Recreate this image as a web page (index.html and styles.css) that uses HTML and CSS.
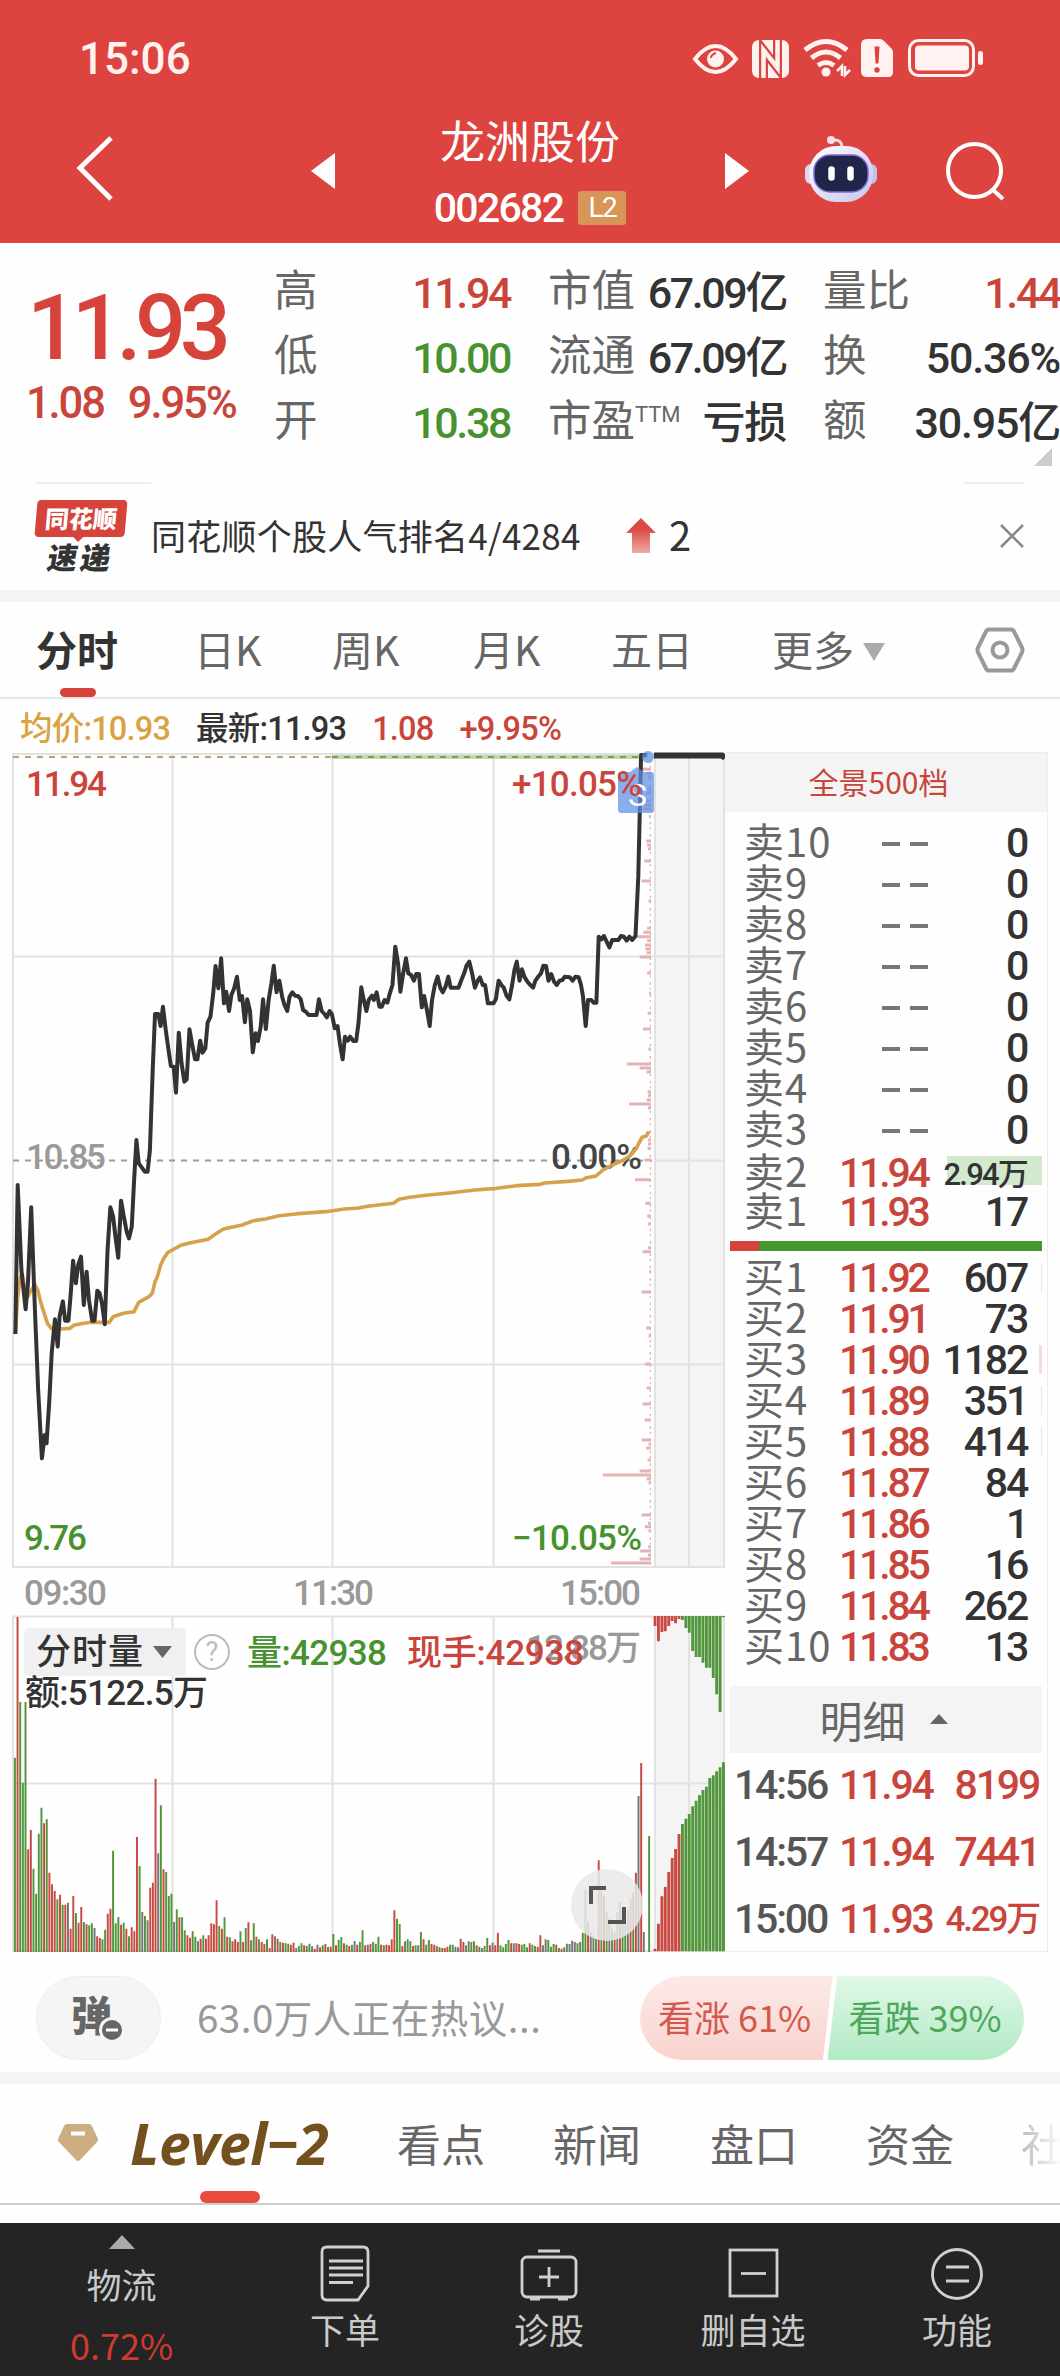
FILE: index.html
```html
<!DOCTYPE html>
<html lang="zh-CN">
<head>
  <meta charset="UTF-8">
  <meta name="viewport" content="width=device-width, initial-scale=1.0">
  <title>龙洲股份 002682</title>
  <link rel="stylesheet" href="styles.css">
</head>
<body>
  <header class="header">
    <div class="status-bar">
      <span class="clock">15:06</span>
      <svg class="status-icons" width="294" height="44" viewBox="0 0 294 44" fill="none" stroke="#fff2f0" stroke-width="4">
        <path d="M4 22Q14 9 24.500 9T45 22Q35 35 24.500 35T4 22Z"/>
        <circle cx="24.500" cy="22" r="8.500" fill="#fff2f0" stroke="none"/>
        <path d="M20 21c0-3 2-4 5-5" stroke="#dd4440" stroke-width="2"/>
        <rect x="61" y="3" width="37" height="38" rx="7" fill="#fff2f0" stroke="none"/>
        <path d="M72.500 42V13L86.500 31V2" stroke="#dd4440" stroke-width="9"/>
        <path d="M72.500 41V13L86.500 31V3" stroke-width="4.500"/>
        <path d="M114 13q21-17 42 0M120.500 21q14.500-12 29 0M127 28.500q8-6 16 0" stroke-width="5"/>
        <circle cx="135" cy="35" r="4.500" fill="#fff2f0" stroke="none"/>
        <path d="M151 39V29l-5 5M154 29v9l5-5" stroke-width="2.500"/>
        <path d="M176 2h13q2 0 4 2l7 7q2 2 2 4v20q0 5-5 5h-21q-6 0-6-6V8q0-6 6-6z" fill="#fff2f0" stroke="none"/>
        <path d="M183.500 9.500h5l-1 17h-3z" fill="#dd4440" stroke="none"/>
        <circle cx="186" cy="33" r="2.700" fill="#dd4440" stroke="none"/>
        <rect x="218.500" y="3.500" width="64" height="35" rx="9" stroke-width="3"/>
        <rect x="224" y="8.500" width="54" height="25" rx="4" fill="#fff2f0" stroke="none"/>
        <rect x="287" y="14" width="5" height="14" rx="2.500" fill="#fff2f0" stroke="none"/>
      </svg>
    </div>
    <div class="title-bar">
      <svg class="back" width="40" height="66" viewBox="0 0 40 66" fill="none" stroke="#fff" stroke-width="5"><path d="M36 3L5 33l31 31"/></svg>
      <svg class="prev" width="24" height="36" viewBox="0 0 24 36"><path d="M24 0v36L0 18z" fill="#fff"/></svg>
      <div class="stock">
        <div class="stock-name">龙洲股份</div>
        <div class="stock-code">002682<span class="level">L2</span></div>
      </div>
      <svg class="next" width="24" height="36" viewBox="0 0 24 36"><path d="M0 0v36l24-18z" fill="#fff"/></svg>
      <svg class="robot" width="72" height="68" viewBox="0 0 72 68">
        <defs>
          <linearGradient id="helmet" x2="1" y2="1"><stop offset="0" stop-color="#fff"/><stop offset="1" stop-color="#c6c4f0"/></linearGradient>
        </defs>
        <path d="M37 13Q37 4 28 5" fill="none" stroke="#f6dfe8" stroke-width="3"/>
        <circle cx="26" cy="5" r="4" fill="#f6dfe8"/>
        <rect x="0" y="29" width="12" height="20" rx="6" fill="#dcd9f5"/>
        <rect x="60" y="29" width="12" height="20" rx="6" fill="#c3c0ee"/>
        <rect x="4" y="11" width="64" height="56" rx="27" fill="url(#helmet)"/>
        <rect x="9" y="20" width="54" height="37" rx="16" fill="#20264a" stroke="#7d6bd8" stroke-width="1.500"/>
        <path d="M26.500 34.500v8M45.500 34.500v8" stroke="#fff" stroke-width="6.500" stroke-linecap="round"/>
      </svg>
      <svg class="search" width="62" height="60" viewBox="0 0 62 60" fill="none" stroke="#fff" stroke-width="4"><circle cx="29.500" cy="29.500" r="26.500"/><path d="M47 48l11 10"/></svg>
    </div>
  </header>

  <section class="quote">
    <div class="price">
      <div class="price-now">11.93</div>
      <div class="price-change"><span>1.08</span><span>9.95%</span></div>
    </div>
    <div class="stats">
      <span class="label">高</span><span class="value up">11.94</span>
      <span class="label">市值</span><span class="value">67.09亿</span>
      <span class="label">量比</span><span class="value up">1.44</span>
      <span class="label">低</span><span class="value down">10.00</span>
      <span class="label">流通</span><span class="value">67.09亿</span>
      <span class="label">换</span><span class="value wide">50.36%</span>
      <span class="label">开</span><span class="value down">10.38</span>
      <span class="label">市盈<sup>TTM</sup></span><span class="value wide">亏损</span>
      <span class="label">额</span><span class="value wide">30.95亿</span>
    </div>
    <div class="quote-corner"></div>
  </section>

  <section class="notice">
    <div class="notice-logo">
      <div class="logo-top">同花顺</div>
      <div class="logo-bottom">速递</div>
    </div>
    <span class="notice-text">同花顺个股人气排名4/4284</span>
    <svg class="rank-up" width="30" height="36" viewBox="0 0 30 36">
      <defs><linearGradient id="rank" x2="0" y2="1"><stop offset=".3" stop-color="#dc4842"/><stop offset="1" stop-color="#efaca8"/></linearGradient></defs>
      <path d="M15 0l15 15h-6v20H6V15H0z" fill="url(#rank)"/>
    </svg>
    <span class="rank">2</span>
    <svg class="close" width="24" height="24" viewBox="0 0 24 24" stroke="#888" stroke-width="2.500"><path d="M1 1l22 22M23 1L1 23"/></svg>
  </section>

  <nav class="period-tabs">
    <span class="period active">分时</span>
    <span class="period">日K</span>
    <span class="period">周K</span>
    <span class="period">月K</span>
    <span class="period">五日</span>
    <span class="period">更多<i class="caret"></i></span>
    <svg class="settings" width="50" height="46" viewBox="0 0 50 46" fill="none" stroke="#999" stroke-width="4"><path d="M14 2.500h22q2 0 3 2l8 16q1 2.500 0 5l-8 16q-1 2-3 2H14q-2 0-3-2l-8-16q-1-2.500 0-5l8-16q1-2 3-2z"/><circle cx="25" cy="23" r="7.500"/></svg>
  </nav>

  <div class="chart-info">
    <span class="avg">均价:10.93</span>
    <span>最新:11.93</span>
    <span class="up">1.08</span>
    <span class="up">+9.95%</span>
  </div>

  <main class="market">
    <div class="charts">
      <svg class="price-chart" width="725" height="860" viewBox="0 0 725 860">
        <rect x="654" y="3" width="71" height="814" fill="#f4f4f4"/>
        <path class="grid" d="M13 4H724V817H13ZM172.500 4V817M332.500 4V817M493.500 4V817M655 4V817M689 4V817M13 206.500H724M13 614.500H724M654 410.500H724"/>
        <path d="M13 7H332" stroke="#bfa071" stroke-width="2" stroke-dasharray="6 6"/>
        <path d="M332 7H645" stroke="#b9dcb0" stroke-width="4"/>
        <path d="M332 7H645" stroke="#879a58" stroke-width="2" stroke-dasharray="6 6"/>
        <path d="M13 410.500H652" stroke="#999" stroke-width="2" stroke-dasharray="6 6"/>
        <g class="chart-text">
          <text x="26" y="419" textLength="80" fill="#999">10.85</text>
          <text x="551" y="419" textLength="91" fill="#444">0.00%</text>
        </g>
        <svg width="730" height="860" viewBox="0 60 1568 2580" preserveAspectRatio="none">
          <path id="profile" class="profile"/>
          <path class="profile-edge" d="M1397 90V2510"/>
          <polyline class="avg-line" points="33,1812 38,1700 44,1640 48,1635 54,1680 60,1700 67,1680 75,1665 81,1680 88,1720 95,1750 102,1780 110,1795 130,1797 150,1795 160,1785 180,1780 195,1777 235,1777 243,1760 265,1750 288,1745 298,1717 320,1700 327,1690 333,1655 338,1640 345,1605 352,1585 360,1568 370,1560 388,1546 410,1538 447,1528 463,1512 480,1497 520,1485 545,1472 570,1467 600,1457 640,1451 700,1445 740,1437 770,1434 790,1429 845,1420 857,1408 880,1402 920,1395 970,1388 1020,1380 1060,1376 1110,1367 1160,1363 1170,1359 1220,1354 1250,1350 1260,1343 1280,1338 1295,1320 1320,1302 1340,1290 1355,1275 1367,1255 1372,1240 1379,1222 1388,1218 1394,1204"/>
          <polyline class="price-line" points="33,1812 38,1365 46,1620 55,1738 60,1660 67,1432 75,1740 82,1980 90,2185 96,2115 100,2140 106,2010 111,1870 118,1768 124,1850 128,1760 135,1714 140,1772 147,1772 152,1690 157,1592 163,1660 168,1605 174,1580 180,1725 186,1625 191,1710 198,1772 203,1772 209,1682 214,1690 219,1720 225,1783 231,1560 237,1432 243,1460 248,1520 254,1583 260,1412 266,1460 272,1505 277,1525 283,1490 288,1352 293,1230 298,1300 306,1315 311,1325 317,1325 322,1260 328,1020 333,852 340,852 345,888 350,830 356,900 362,960 367,1008 373,1010 378,1088 384,908 390,1000 396,1055 401,1048 407,898 413,945 419,988 424,988 430,932 435,968 441,955 446,878 452,860 458,790 463,708 469,775 475,685 481,820 486,785 492,843 497,795 503,775 509,740 515,810 520,798 526,877 531,808 537,843 543,967 549,910 554,933 560,890 565,808 571,897 577,810 583,760 588,707 594,787 600,752 606,800 611,825 617,843 622,800 628,787 634,797 640,798 646,808 651,840 657,845 663,855 680,855 685,808 691,843 697,852 702,862 708,843 713,853 719,895 725,888 730,940 736,988 741,920 747,932 752,920 759,933 765,933 770,880 776,772 781,808 787,843 792,810 799,797 803,810 809,787 815,830 820,830 826,810 832,818 838,787 843,765 849,650 855,700 860,785 866,730 872,685 877,730 883,735 889,752 894,732 900,732 906,832 911,798 917,840 923,888 928,810 934,765 940,740 946,775 951,787 957,770 963,740 968,773 985,773 991,750 997,730 1002,707 1008,695 1014,730 1020,773 1026,752 1031,742 1037,765 1042,765 1048,820 1060,820 1065,808 1071,752 1077,765 1082,773 1088,797 1094,808 1100,765 1105,720 1110,695 1116,752 1121,718 1127,742 1133,755 1139,765 1145,773 1150,752 1156,740 1162,730 1167,707 1173,708 1178,752 1184,732 1190,755 1196,765 1202,752 1208,750 1213,740 1224,742 1230,752 1236,740 1243,742 1248,765 1252,797 1258,888 1263,810 1270,810 1275,818 1281,818 1286,620 1292,628 1297,618 1303,635 1309,652 1315,630 1328,630 1334,618 1340,620 1346,632 1352,620 1358,630 1365,618 1371,440 1377,75 1390,75"/>
        </svg>
        <path d="M654 5.500H722L725 8" fill="none" stroke="#333" stroke-width="6"/>
        <g class="sell-mark">
          <path d="M621 22h9l7-5 7 5h7q3 0 3 3v35q0 3-3 3h-30q-3 0-3-3V25q0-3 3-3z"/>
          <text x="628" y="56" textLength="16">S</text>
          <circle cx="648" cy="7" r="6"/>
        </g>
        <g class="chart-text">
          <text x="26" y="46" textLength="81" fill="#c9453c">11.94</text>
          <text x="512" y="46" textLength="130" fill="#c9453c">+10.05%</text>
          <text x="24" y="800" textLength="63" fill="#47922f">9.76</text>
          <text x="512" y="800" textLength="130" fill="#47922f">−10.05%</text>
          <text x="24" y="855" textLength="83" fill="#999">09:30</text>
          <text x="293" y="855" textLength="81" fill="#999">11:30</text>
          <text x="560" y="855" textLength="81" fill="#999">15:00</text>
        </g>
      </svg>

      <svg class="volume-chart" width="725" height="342" viewBox="0 0 725 342">
        <rect x="654" y="6" width="71" height="336" fill="#f4f4f4"/>
        <path class="grid" d="M13 6.500H724V341H13ZM172.500 6V342M332.500 6V342M493.500 6V342M655 6V342M689 6V342M13 173.500H724"/>
        <svg width="730" height="342" viewBox="0 30 1568 1026" preserveAspectRatio="none">
          <path id="vol-r" class="bar-r"/>
          <path id="vol-g" class="bar-g"/>
          <path id="vol-k" class="bar-k"/>
          <path id="after-r" class="after-r"/>
          <path id="after-g" class="after-g"/>
        </svg>
        <rect x="24" y="18" width="162" height="48" rx="5" fill="#f0f0f0"/>
        <path d="M153 36h19l-9.500 12z" fill="#666"/>
        <g class="chart-text">
          <text x="36" y="54" textLength="107" fill="#333">分时量</text>
          <text x="526" y="50" textLength="115" fill="#999">12.88万</text>
          <text x="247" y="55" textLength="140" fill="#47922f">量:42938</text>
          <text x="407" y="55" textLength="177" fill="#c9453c">现手:42938</text>
          <text x="25" y="95" textLength="183" fill="#333">额:5122.5万</text>
        </g>
        <circle cx="212" cy="42" r="17" fill="none" stroke="#bbb" stroke-width="2"/>
        <text class="help" x="212" y="51">?</text>
        <circle cx="607" cy="295" r="36" fill="#e9e9e9" fill-opacity=".85"/>
        <path d="M591 294V278H606M624 297V312H608" fill="none" stroke="#555" stroke-width="4"/>
      </svg>
    </div>

    <aside class="book">
      <div class="book-title">全景500档</div>
      <div class="orders" id="asks"></div>
      <div class="ratio"></div>
      <div class="orders" id="bids"></div>
      <div class="detail-title">明细<i class="caret-up"></i></div>
      <div class="trades">
        <span class="time">14:56</span><span>11.94</span><span class="amount">8199</span>
        <span class="time">14:57</span><span>11.94</span><span class="amount">7441</span>
        <span class="time">15:00</span><span>11.93</span><span class="amount small">4.29万</span>
      </div>
    </aside>
  </main>

  <section class="discuss">
    <div class="danmu">弹<svg class="danmu-off" width="26" height="26" viewBox="0 0 26 26"><circle cx="13" cy="13" r="11.500" fill="#666" stroke="#f5f5f5" stroke-width="3"/><path d="M7 13h12" stroke="#fff" stroke-width="3"/></svg></div>
    <span class="discuss-text">63.0万人正在热议...</span>
    <div class="vote">
      <span class="vote-up">看涨 61%</span>
      <span class="vote-down">看跌 39%</span>
    </div>
  </section>

  <nav class="info-tabs">
    <svg class="gem" width="42" height="38" viewBox="0 0 42 38"><path d="M10 0h22q2 0 3 2l6 13q0 2-1 3L23 36q-2 2-4 0L2 18q-2-1-1-3L7 2q1-2 3-2z" fill="#cdae80"/><path d="M14 9.500h14" stroke="#fff" stroke-width="4"/></svg>
    <span class="level2">Level−2</span>
    <span>看点</span>
    <span>新闻</span>
    <span>盘口</span>
    <span>资金</span>
    <span class="faded">社</span>
  </nav>

  <footer class="toolbar">
    <div class="sector">
      <i class="sector-arrow"></i>
      <span>物流</span>
      <span class="sector-change">0.72%</span>
    </div>
    <div class="tool">
      <svg width="60" height="60" viewBox="0 0 60 60"><path d="M12 4h36q5 0 5 5v34L43 57H12q-5 0-5-5V9q0-5 5-5z"/><path d="M14 18h34M14 25h34M14 32h34M14 39.500h24"/></svg>
      <span>下单</span>
    </div>
    <div class="tool">
      <svg width="60" height="60" viewBox="0 0 60 60"><rect x="3" y="14" width="54" height="40" rx="5"/><path d="M19 8h22M30 24v20M20 34h20M11 56h10M39 56h10"/></svg>
      <span>诊股</span>
    </div>
    <div class="tool">
      <svg width="60" height="60" viewBox="0 0 60 60"><rect x="7" y="7" width="47" height="46"/><path d="M18 30.500h25"/></svg>
      <span>删自选</span>
    </div>
    <div class="tool">
      <svg width="60" height="60" viewBox="0 0 60 60"><circle cx="30" cy="31" r="24.500"/><path d="M19 24h23M19 38h23"/></svg>
      <span>功能</span>
    </div>
  </footer>

  <script>
    // Order book rows: label, price, amount, width of the depth bar
    const asks = [
      ['卖10', '', '0'], ['卖9', '', '0'], ['卖8', '', '0'], ['卖7', '', '0'], ['卖6', '', '0'],
      ['卖5', '', '0'], ['卖4', '', '0'], ['卖3', '', '0'], ['卖2', '11.94', '2.94万', 95], ['卖1', '11.93', '17']
    ];
    const bids = [
      ['买1', '11.92', '607', 1], ['买2', '11.91', '73'], ['买3', '11.90', '1182', 3], ['买4', '11.89', '351', 1],
      ['买5', '11.88', '414', 1], ['买6', '11.87', '84'], ['买7', '11.86', '1'], ['买8', '11.85', '16'],
      ['买9', '11.84', '262'], ['买10', '11.83', '13']
    ];

    function renderOrders(id, rows) {
      document.getElementById(id).innerHTML = rows.map(([label, price, amount, depth]) => `
        <div class="order">
          <span class="order-label">${label}</span>
          <span class="order-price">${price || '<i class="dash"></i><i class="dash"></i>'}</span>
          <span class="order-amount${amount.includes('万') ? ' small' : ''}">${amount}</span>
          ${depth ? `<i class="depth" style="width: ${depth}px"></i>` : ''}
        </div>`).join('');
    }

    renderOrders('asks', asks);
    renderOrders('bids', bids);

    // Minute volume: r = up, g = down, k = flat
    const volume = `g583 r1005 g750 g508 g750 r308 r366 g250 g175 g355 g433 r386 g398 r238 r203 r183 g158 r172 g142 r142
      k148 r70 r168 g117 r88 r135 g90 r83 g80 g86 k72 r47 r42 g38 g67 r115 r130 g304 g86 g105
      r82 g88 r70 g47 r74 r62 r345 g258 k120 g108 k95 r193 r208 r520 k296 g440 r248 g240 g168 g175
      k90 g128 r104 g104 g65 r50 r43 g62 g46 k32 r40 g50 r40 r50 r86 r83 r155 g78 r70 g104
      r46 g44 r32 r38 r30 g62 r30 g72 r89 g35 g86 r46 g38 r30 r24 g38 r12 r53 k47 r40
      g30 r28 g26 g25 r22 r28 k12 g18 g26 r20 g18 g25 k17 r10 k22 r14 g20 r24 g15 r16
      g54 r20 g37 g45 r26 g22 r18 g22 k33 r22 g30 g65 r20 k22 r24 g30 g25 g46 r22 g20
      r22 r20 r38 r125 g100 g84 r18 k32 g38 g32 r18 g20 k20 g60 r38 g22 g36 r24 r22 g18
      r14 g12 r12 r16 g22 g22 k16 k14 r40 r30 g20 k32 g30 g32 r20 g16 k12 g18 g42 r20
      k28 r20 r58 g20 g14 g24 g36 r26 k26 r26 r24 g22 g24 g14 r26 g22 g18 r16 r50 k20
      k38 g36 g16 g24 r22 g12 r10 g14 k25 k24 k34 k30 g26 k30 g58 g185 r92 k60 g50 k40
      r275 g190 r168 g120 k100 g70 r60 k120 r150 g130 g90 k125 r160 g180 r238 k468 r567 k60 g0 g348`.split(/\s+/);

    const paths = { r: '', g: '', k: '' };
    volume.forEach((item, i) => {
      paths[item[0]] += `M${(32 + i * 5.7).toFixed(1)} 1056v-${item.slice(1)}`;
    });
    for (const key in paths) {
      document.getElementById('vol-' + key).setAttribute('d', paths[key]);
    }

    // Closing auction: matched volume from the bottom, unmatched from the top
    const matched = [8, 83, 165, 193, 238, 280, 307, 352, 382, 398, 412, 435, 452, 468, 484, 494, 520, 528, 540, 552, 567];
    const unmatched = [30, 76, 48, 46, 30, 15, 22, 9, 12, 36, 50, 105, 123, 123, 140, 155, 155, 186, 235, 288, 4];
    const auction = { r: '', g: '' };
    matched.forEach((height, i) => {
      const x = (1407 + i * 7.35).toFixed(1);
      auction[i < 8 ? 'r' : 'g'] += `M${x} 1054v-${height}M${x} 48v${unmatched[i]}`;
    });
    document.getElementById('after-r').setAttribute('d', auction.r);
    document.getElementById('after-g').setAttribute('d', auction.g);

    // Volume by price level: [y, length]
    const profile = [[118, 18], [130, 8], [142, 6], [178, 8], [190, 10], [213, 12], [225, 14], [237, 16], [261, 4], [333, 10],
      [345, 8], [357, 6], [393, 14], [453, 20], [513, 5], [595, 8], [607, 16], [620, 30], [632, 8], [645, 13], [657, 12],
      [668, 9], [681, 24], [729, 8], [790, 4], [850, 7], [897, 17], [957, 5], [1002, 51], [1014, 24], [1026, 9], [1085, 7],
      [1097, 6], [1110, 9], [1122, 47], [1134, 6], [1230, 6], [1242, 6], [1255, 7], [1290, 14], [1349, 34], [1420, 12],
      [1458, 8], [1482, 6], [1553, 6], [1565, 18], [1625, 4], [1686, 20], [1794, 10], [1818, 5], [1902, 12], [1974, 9],
      [2022, 18], [2070, 13], [2130, 20], [2142, 5], [2154, 10], [2190, 7], [2223, 24], [2235, 103], [2247, 9], [2259, 5],
      [2355, 20], [2380, 6], [2390, 13], [2402, 5], [2450, 6], [2463, 23], [2475, 6], [2487, 24], [2499, 85]];
    document.getElementById('profile').setAttribute('d', profile.map(([y, length]) => `M1398 ${y}h-${length}`).join(''));
  </script>
</body>
</html>
```
FILE: styles.css
```css
* {
  box-sizing: border-box;
}

body {
  margin: 0;
  width: 1060px;
  overflow-x: hidden;
  background: #fefefe;
  color: #333;
  font-family: Roboto, "Noto Sans CJK SC", sans-serif;
  font-kerning: none;
}

span {
  white-space: nowrap;
}

.up {
  color: #c9453c;
}

.down {
  color: #47922f;
}

/* Header */
.header {
  height: 243px;
  background: #dd4440;
  color: #fff;
}

.status-bar {
  display: flex;
  justify-content: space-between;
  align-items: center;
  height: 117px;
  padding: 0 75px 0 79px;
}

.clock {
  font-size: 44px;
  font-weight: 500;
  color: #fff2f0;
}

.title-bar {
  display: grid;
  grid-template-columns: 76px 235px 102px 311px 80px 140px 116px;
  height: 126px;
}

.back {
  margin: 18px 0 0 75px;
}

.prev {
  margin: 36px 0 0 235px;
}

.stock {
  grid-column: 3 / 5;
  text-align: center;
  margin-left: 79px;
  width: 280px;
}

.stock-name {
  font-family: "Noto Sans CJK SC", sans-serif;
  font-size: 45px;
  line-height: 46px;
}

.stock-code {
  display: flex;
  justify-content: center;
  align-items: center;
  margin-top: 20px;
  font-size: 41px;
  font-weight: 500;
  line-height: 50px;
  letter-spacing: -1.7px;
}

.level {
  margin-left: 15px;
  width: 48px;
  height: 34px;
  background: #d89558;
  border-radius: 3px;
  font-size: 28px;
  font-weight: 400;
  line-height: 34px;
}

.next {
  margin: 36px 0 0 1px;
}

.robot {
  margin: 18px 0 0 1px;
}

.search {
  margin: 24px 0 0 1px;
}

/* Quote */
.quote {
  position: relative;
  display: flex;
  height: 239px;
  padding-top: 16px;
}

.price {
  width: 276px;
  color: #d5433b;
}

.price-now {
  margin: 24px 0 0 27px;
  font-size: 90px;
  font-weight: 500;
  line-height: 92px;
  letter-spacing: -6.4px;
}

.price-change {
  display: flex;
  gap: 24px;
  margin: 4px 0 0 26px;
  font-size: 43.5px;
  line-height: 50px;
  font-weight: 500;
  letter-spacing: -2.1px;
  color: #c9453c;
}

.stats {
  display: grid;
  grid-template-columns: 60px 176px 38px 86px 152px 37px 74px 163px;
  grid-template-rows: repeat(3, 65px);
  align-items: center;
  width: 786px;
}

.stats .label:nth-child(6n + 1) {
  grid-column: 1;
}

.stats .value:nth-child(6n + 2) {
  grid-column: 2;
}

.stats .label:nth-child(6n + 3) {
  grid-column: 4;
}

.stats .value:nth-child(6n + 4) {
  grid-column: 5;
}

.stats .label:nth-child(6n + 5) {
  grid-column: 7;
}

.stats .value:nth-child(6n) {
  grid-column: 8;
}

.label {
  padding-top: 1px;
  font-size: 43.5px;
  line-height: 50px;
  color: #666;
}

.label sup {
  font-size: 22px;
  vertical-align: 14px;
  line-height: 0;
}

.value {
  padding-top: 2px;
  font-size: 43px;
  line-height: 50px;
  font-weight: 500;
  letter-spacing: -2.4px;
  text-align: right;
}

.value.wide {
  letter-spacing: -1.2px;
}

.quote-corner {
  position: absolute;
  right: 8px;
  bottom: 16px;
  border-left: 18px solid transparent;
  border-bottom: 18px solid #ccc;
}

/* Notice */
.notice {
  position: relative;
  display: flex;
  align-items: center;
  height: 108px;
  padding: 0 36px;
}

.notice::before,
.notice::after {
  content: "";
  position: absolute;
  top: 0;
  left: 36px;
  width: 115px;
  height: 2px;
  background: #eee;
}

.notice::after {
  left: 964px;
  width: 60px;
}

.notice-logo {
  width: 90px;
  text-align: center;
  font-family: "Noto Sans CJK SC", sans-serif;
}

.logo-top {
  position: relative;
  height: 37px;
  background: #d5433b;
  border-radius: 4px;
  color: #fff;
  font-size: 24px;
  font-weight: 900;
  line-height: 36px;
  transform: skewX(-5deg);
}

.logo-top::after {
  content: "";
  position: absolute;
  left: 38px;
  top: 36px;
  border: 6px solid transparent;
  border-top-color: #d5433b;
}

.logo-bottom {
  margin-top: 4px;
  font-size: 30px;
  font-weight: 900;
  line-height: 31px;
  letter-spacing: 3px;
  transform: skewX(-10deg);
}

.notice-text {
  margin-left: 25px;
  width: 475px;
  font-family: "Noto Sans CJK SC", sans-serif;
  font-size: 35px;
  letter-spacing: 0.25px;
  line-height: 40px;
  padding-bottom: 2px;
}

.rank {
  margin-left: 13px;
  padding-bottom: 4px;
  font-family: "Noto Sans CJK SC", sans-serif;
  font-size: 40px;
}

.close {
  margin-left: auto;
}

/* Period tabs */
.period-tabs {
  display: grid;
  grid-template-columns: 158px 138px 141px 138px 161px 203px 50px;
  align-items: center;
  height: 109px;
  padding-left: 36px;
  border-top: 12px solid #f4f4f4;
  border-bottom: 2px solid #e6e6e6;
}

.period {
  font-family: "Noto Sans CJK SC", sans-serif;
  font-size: 41px;
  line-height: 93px;
  padding-bottom: 2px;
  color: #666;
}

.period.active {
  position: relative;
  font-weight: 700;
  color: #333;
}

.period.active::after {
  content: "";
  position: absolute;
  left: 24px;
  bottom: 0;
  width: 36px;
  height: 9px;
  border-radius: 5px;
  background: #d5433b;
}

.caret {
  display: inline-block;
  margin-left: 9px;
  vertical-align: 5px;
  border: 11px solid transparent;
  border-top: 18px solid #aaa;
  border-bottom: 0;
}

.chart-info {
  display: flex;
  gap: 26px;
  height: 51px;
  padding-left: 20px;
  font-size: 32.5px;
  font-weight: 500;
  line-height: 60px;
  letter-spacing: -0.8px;
}

.avg {
  color: #d9a243;
}

/* Charts */
.market {
  display: flex;
  height: 1202px;
}

.charts {
  width: 725px;
}

.charts > svg {
  display: block;
  overflow: visible;
}

.grid {
  fill: none;
  stroke: #e2e2e2;
  stroke-width: 2;
}

.chart-text {
  font-size: 35px;
  font-weight: 500;
}

.price-line,
.avg-line {
  fill: none;
  stroke-linejoin: round;
  vector-effect: non-scaling-stroke;
}

.price-line {
  stroke: #333;
  stroke-width: 4px;
}

.avg-line {
  stroke: #d6a14b;
  stroke-width: 3.6px;
}

.profile {
  stroke: #e5b3b3;
  stroke-width: 9;
}

.profile-edge {
  stroke: #e5b3b3;
  stroke-width: 3;
  stroke-dasharray: 8 9 6 14;
}

.sell-mark {
  fill: #5b8fe3;
  fill-opacity: 0.72;
}

.sell-mark text {
  fill: #fff;
  fill-opacity: 1;
  font-size: 32px;
}

.bar-r,
.bar-g,
.bar-k {
  stroke-width: 4.2;
}

.after-r,
.after-g {
  stroke-width: 6.2;
}

.bar-r,
.after-r {
  stroke: #c94a41;
}

.bar-g,
.after-g {
  stroke: #51963c;
}

.bar-k {
  stroke: #777;
}

.help {
  font-size: 27px;
  fill: #bbb;
  text-anchor: middle;
}

/* Order book */
.book {
  width: 323px;
  margin-top: 2px;
  border: 1px solid #ededed;
  border-left: 0;
}

.book-title {
  height: 59px;
  margin-bottom: 9px;
  padding-right: 15px;
  background: #f4f4f4;
  color: #c9453c;
  font-family: "Noto Sans CJK SC", sans-serif;
  font-size: 30px;
  line-height: 56px;
  text-align: center;
}

.order {
  position: relative;
  display: grid;
  grid-template-columns: 92px 103px 88px;
  align-items: center;
  height: 41px;
  margin-left: 19px;
}

.order-label {
  font-family: "Noto Sans CJK SC", sans-serif;
  font-size: 40px;
  line-height: 36px;
  padding-bottom: 5px;
  letter-spacing: 1px;
  color: #666;
}

.order-price {
  padding: 1px 0 0 3px;
  color: #c9453c;
  font-size: 41px;
  font-weight: 500;
  line-height: 40px;
  letter-spacing: -3.2px;
}

.dash {
  display: inline-block;
  width: 18px;
  height: 4px;
  margin: 0 10px 11px 0;
  background: #777;
}

.dash:first-child {
  margin-left: 43px;
}

.order-amount {
  z-index: 1;
  padding-top: 2px;
  font-size: 41px;
  font-weight: 500;
  line-height: 40px;
  letter-spacing: -2.2px;
  text-align: right;
  justify-self: end;
}

.order-amount.small {
  font-size: 31px;
  letter-spacing: -1.8px;
  padding-top: 6px;
}

.depth {
  position: absolute;
  right: 5px;
  top: 7px;
  height: 29px;
  background: #d2e9cd;
}

#bids .depth {
  background: #f3dcdc;
}

.ratio {
  height: 10px;
  margin: 10px 5px 5px;
  background: linear-gradient(to right, #d5433b 29px, #46962e 29px);
}

.detail-title {
  display: flex;
  justify-content: center;
  align-items: center;
  gap: 24px;
  height: 67px;
  margin: 20px 5px 0;
  padding: 0 5px 2px 0;
  background: #f4f4f4;
  color: #666;
  font-family: "Noto Sans CJK SC", sans-serif;
  font-size: 43px;
}

.caret-up {
  border: 9px solid transparent;
  border-top: 0;
  border-bottom: 10px solid #666;
}

.trades {
  display: grid;
  grid-template-columns: 105px 95px 105px;
  grid-auto-rows: 67px;
  padding-left: 9px;
  color: #c9453c;
  font-size: 41px;
  font-weight: 500;
  line-height: 65px;
  letter-spacing: -2.2px;
}

.time {
  color: #555;
}

.amount {
  text-align: right;
}

.amount.small {
  font-size: 35px;
}

/* Discussion */
.discuss {
  display: flex;
  align-items: center;
  height: 132px;
  padding: 0 36px;
  border-bottom: 12px solid #f4f4f4;
  font-family: "Noto Sans CJK SC", sans-serif;
}

.danmu {
  position: relative;
  width: 125px;
  height: 84px;
  margin-top: 12px;
  border: 1px solid #eee;
  border-radius: 42px;
  background: #f5f5f5;
  color: #666;
  font-size: 41px;
  font-weight: 900;
  line-height: 72px;
  padding-left: 34px;
}

.danmu-off {
  position: absolute;
  left: 62px;
  top: 40px;
}

.discuss-text {
  margin: 12px 0 4px 36px;
  font-size: 38.5px;
  letter-spacing: 0.5px;
  color: #999;
}

.vote {
  display: flex;
  width: 384px;
  height: 84px;
  margin: 12px 0 0 auto;
  border-radius: 42px;
  overflow: hidden;
  font-size: 36px;
  line-height: 80px;
}

.vote-up {
  width: 195px;
  padding-left: 18px;
  background: linear-gradient(#fdeae8, #f8d3ce);
  clip-path: polygon(0 0, 100% 0, 95% 100%, 0 100%);
  color: #d5584e;
}

.vote-down {
  width: 199px;
  margin-left: -5px;
  padding-left: 21px;
  background: linear-gradient(#e0f8e8, #b2eac5);
  clip-path: polygon(5% 0, 100% 0, 100% 100%, 0 100%);
  color: #4fa75c;
}

/* Info tabs */
.info-tabs {
  position: relative;
  display: grid;
  grid-template-columns: 71px 269px 156px 157px 156px 155px 90px;
  align-items: center;
  height: 121px;
  padding: 0 0 2px 57px;
  border-bottom: 2px solid #ccc;
  overflow: hidden;
  color: #666;
  font-family: "Noto Sans CJK SC", sans-serif;
  font-size: 44px;
}

.level2 {
  padding-left: 2px;
  color: #74501f;
  font-family: "Open Sans", sans-serif;
  font-size: 57px;
  font-style: italic;
  font-weight: 700;
  letter-spacing: -0.5px;
}

.info-tabs::after {
  content: "";
  position: absolute;
  left: 200px;
  bottom: 0;
  width: 60px;
  height: 12px;
  border-radius: 6px;
  background: #e74c3e;
}

.faded {
  color: transparent;
  background: linear-gradient(to right, #bbb, #fff 42px);
  -webkit-background-clip: text;
  background-clip: text;
}

/* Toolbar */
.toolbar {
  display: grid;
  grid-template-columns: 243px repeat(4, 204px);
  height: 153px;
  margin-top: 18px;
  background: #242424;
  color: #c9c9c9;
  font-family: "Noto Sans CJK SC", sans-serif;
  font-size: 35px;
}

.sector,
.tool {
  display: flex;
  flex-direction: column;
  align-items: center;
}

.sector-arrow {
  margin: 12px 0 9px;
  border: 13px solid transparent;
  border-top: 0;
  border-bottom: 14px solid #aaa;
}

.sector span {
  line-height: 52px;
}

.sector .sector-change {
  margin-top: 8px;
  color: #d03a2e;
  font-size: 36px;
}

.tool svg {
  margin-top: 20px;
  fill: none;
  stroke: #d0d0d0;
  stroke-width: 2.8;
}

.tool span {
  line-height: 52px;
}
```
